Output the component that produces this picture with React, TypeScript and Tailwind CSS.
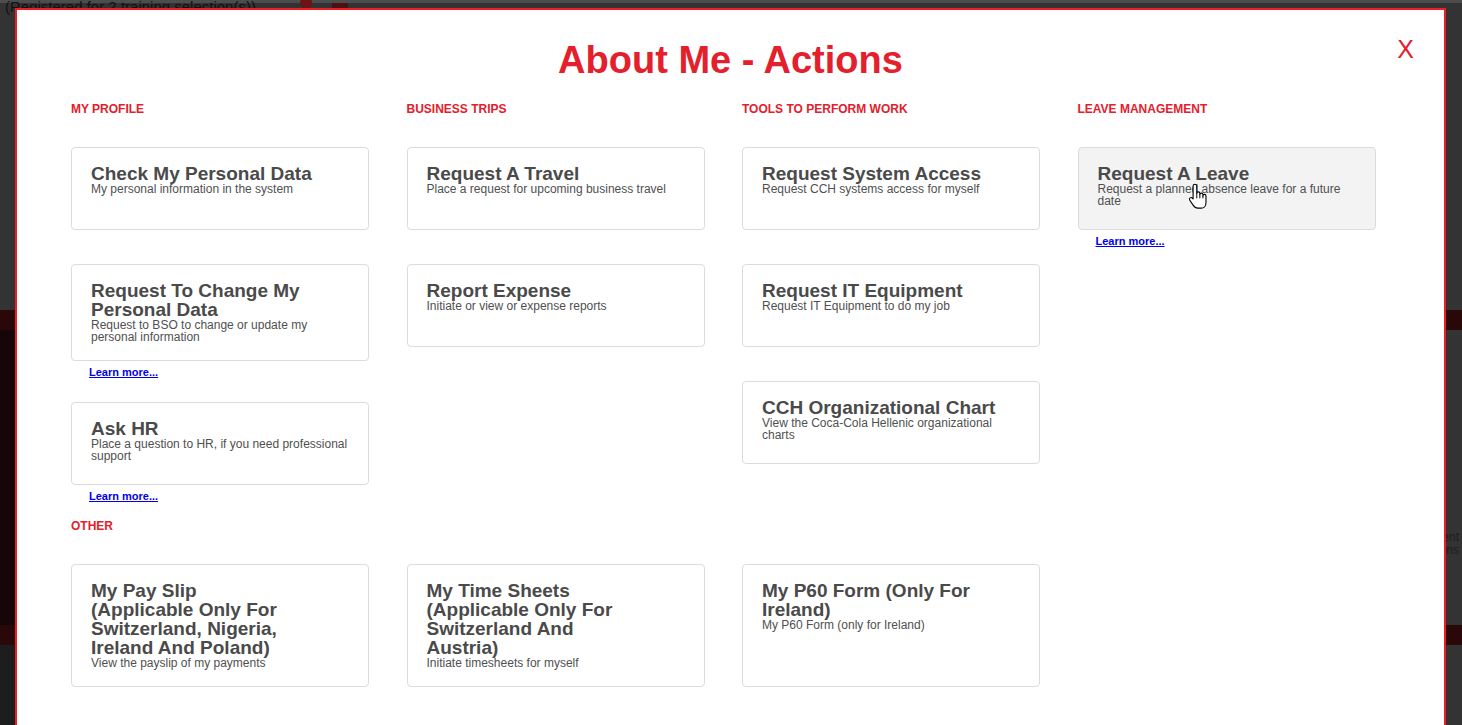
import React from 'react';

type Action = {
	title: string[];
	desc: string;
	link?: boolean;
	hover?: boolean;
};

const columns: { heading: string; items: Action[] }[] = [
	{
		heading: 'My Profile',
		items: [
			{ title: ['Check My Personal Data'], desc: 'My personal information in the system' },
			{
				title: ['Request To Change My', 'Personal Data'],
				desc: 'Request to BSO to change or update my personal information',
				link: true,
			},
			{
				title: ['Ask HR'],
				desc: 'Place a question to HR, if you need professional support',
				link: true,
			},
		],
	},
	{
		heading: 'Business Trips',
		items: [
			{ title: ['Request A Travel'], desc: 'Place a request for upcoming business travel' },
			{ title: ['Report Expense'], desc: 'Initiate or view or expense reports' },
		],
	},
	{
		heading: 'Tools To Perform Work',
		items: [
			{ title: ['Request System Access'], desc: 'Request CCH systems access for myself' },
			{ title: ['Request IT Equipment'], desc: 'Request IT Equipment to do my job' },
			{
				title: ['CCH Organizational Chart'],
				desc: 'View the Coca-Cola Hellenic organizational charts',
			},
		],
	},
	{
		heading: 'Leave Management',
		items: [
			{
				title: ['Request A Leave'],
				desc: 'Request a planned absence leave for a future date',
				link: true,
				hover: true,
			},
		],
	},
];

const other: Action[] = [
	{
		title: ['My Pay Slip', '(Applicable Only For', 'Switzerland, Nigeria,', 'Ireland And Poland)'],
		desc: 'View the payslip of my payments',
	},
	{
		title: ['My Time Sheets', '(Applicable Only For', 'Switzerland And', 'Austria)'],
		desc: 'Initiate timesheets for myself',
	},
	{ title: ['My P60 Form (Only For', 'Ireland)'], desc: 'My P60 Form (only for Ireland)' },
];

function HandCursor() {
	return (
		<svg
			width="20"
			height="27"
			viewBox="0 0 16 22"
			className="absolute left-[109px] top-[35px] pointer-events-none">
			<path
				d="M4 13 V2.5 a1.5 1.5 0 0 1 3 0 V8.5 a1.25 1.25 0 0 1 2.5 0 V9.5 a1.25 1.25 0 0 1 2.5 0 V10.5 a1.25 1.25 0 0 1 2.5 0 V16 c0 2.5 -1.5 4.5 -4 4.5 H8 c-2 0 -3 -1 -4 -2.5 L1.2 13.8 a1.3 1.3 0 0 1 2.1 -1.5 Z"
				fill="#fff"
				stroke="#000"
				strokeWidth="0.9"
				strokeLinejoin="round"
			/>
			<path d="M7 8.5 V12.5 M9.5 9.5 V12.5 M12 10.5 V12.5" stroke="#000" strokeWidth="0.8" />
		</svg>
	);
}

function Card({ item }: { item: Action }) {
	return (
		<div>
			<div
				className={`relative min-h-[83px] h-full rounded-[4px] border border-[#dcdcdc] px-[19px] pt-[16px] pb-[17px] ${
					item.hover ? 'bg-[#f3f3f3]' : 'bg-white'
				}`}>
				<div className="text-[19px] leading-[19px] font-bold text-[#4a4a4a]">
					{item.title.map((t) => (
						<div key={t}>{t}</div>
					))}
				</div>
				<div className="text-[12px] leading-[12px] text-[#505050]">{item.desc}</div>
				{item.hover && <HandCursor />}
			</div>
			{item.link && (
				<a href="#" className="ml-[18px] mt-[5px] block text-[11px] leading-[12px] font-bold text-[#0000ee] underline">
					Learn more...
				</a>
			)}
		</div>
	);
}

function Heading({ text }: { text: string }) {
	return (
		<div className="mb-[32px] text-[12px] leading-[12px] font-bold uppercase text-[#e3202c]">
			{text}
		</div>
	);
}

export default function App() {
	return (
		<div className="relative h-[725px] w-full overflow-hidden bg-[#333] font-['Liberation_Sans',Arial,sans-serif]">
			{/* page behind the overlay */}
			<div className="h-[3px] bg-[#4d4d4d]" />
			<div className="flex h-[307px] items-start gap-[20px] pl-[5px]">
				<span className="-mt-[4px] text-[15px] leading-[15px] text-[#111]">
					(Registered for 2 training selection(s))
				</span>
				<span className="-mt-[6px] ml-[24px] h-[12px] w-[12px] rounded-full bg-[#6a1414]" />
				<span className="h-[8px] w-[16px] bg-[#4a1212]" />
			</div>
			<div className="h-[20px] bg-[#2a080a]" />
			<div className="flex h-[295px]">
				<div className="w-[40px] bg-[#170607]" />
				<div className="flex flex-1 flex-col items-end justify-end pb-[68px] pr-[3px] text-[12px] leading-[13px] text-[#1c1c1c]">
					<span>Management</span>
					<span>Actions</span>
				</div>
			</div>
			<div className="h-[20px] bg-[#2a080a]" />
			<div className="flex h-[80px]">
				<div className="w-[40px] bg-[#1d1d1d]" />
			</div>

			{/* modal */}
			<div className="absolute left-[15px] right-[16px] top-[8px] h-[760px] border-2 border-[#ee1c25] bg-white pt-[28px] pl-[54px]">
				<button className="absolute right-[30px] top-[27px] text-[25px] leading-[25px] text-[#e3202c]">
					X
				</button>
				<h1 className="-ml-[54px] text-center text-[38px] leading-[44px] font-bold text-[#e3202c]">
					About Me - Actions
				</h1>

				<div className="mt-[21px] grid grid-cols-[repeat(4,298px)] gap-x-[37.5px]">
					{columns.map((col) => (
						<div key={col.heading} className="flex flex-col">
							<Heading text={col.heading} />
							{col.items.map((item, i) => (
								<div
									key={item.title.join(' ')}
									className={
										i === 0 ? '' : col.items[i - 1].link ? 'mt-[24px]' : 'mt-[34px]'
									}>
									<Card item={item} />
								</div>
							))}
						</div>
					))}
				</div>

				<div className="mt-[18px]">
					<Heading text="Other" />
					<div className="grid grid-cols-[repeat(4,298px)] gap-x-[37.5px]">
						{other.map((item) => (
							<Card key={item.title.join(' ')} item={item} />
						))}
					</div>
				</div>
			</div>
		</div>
	);
}
